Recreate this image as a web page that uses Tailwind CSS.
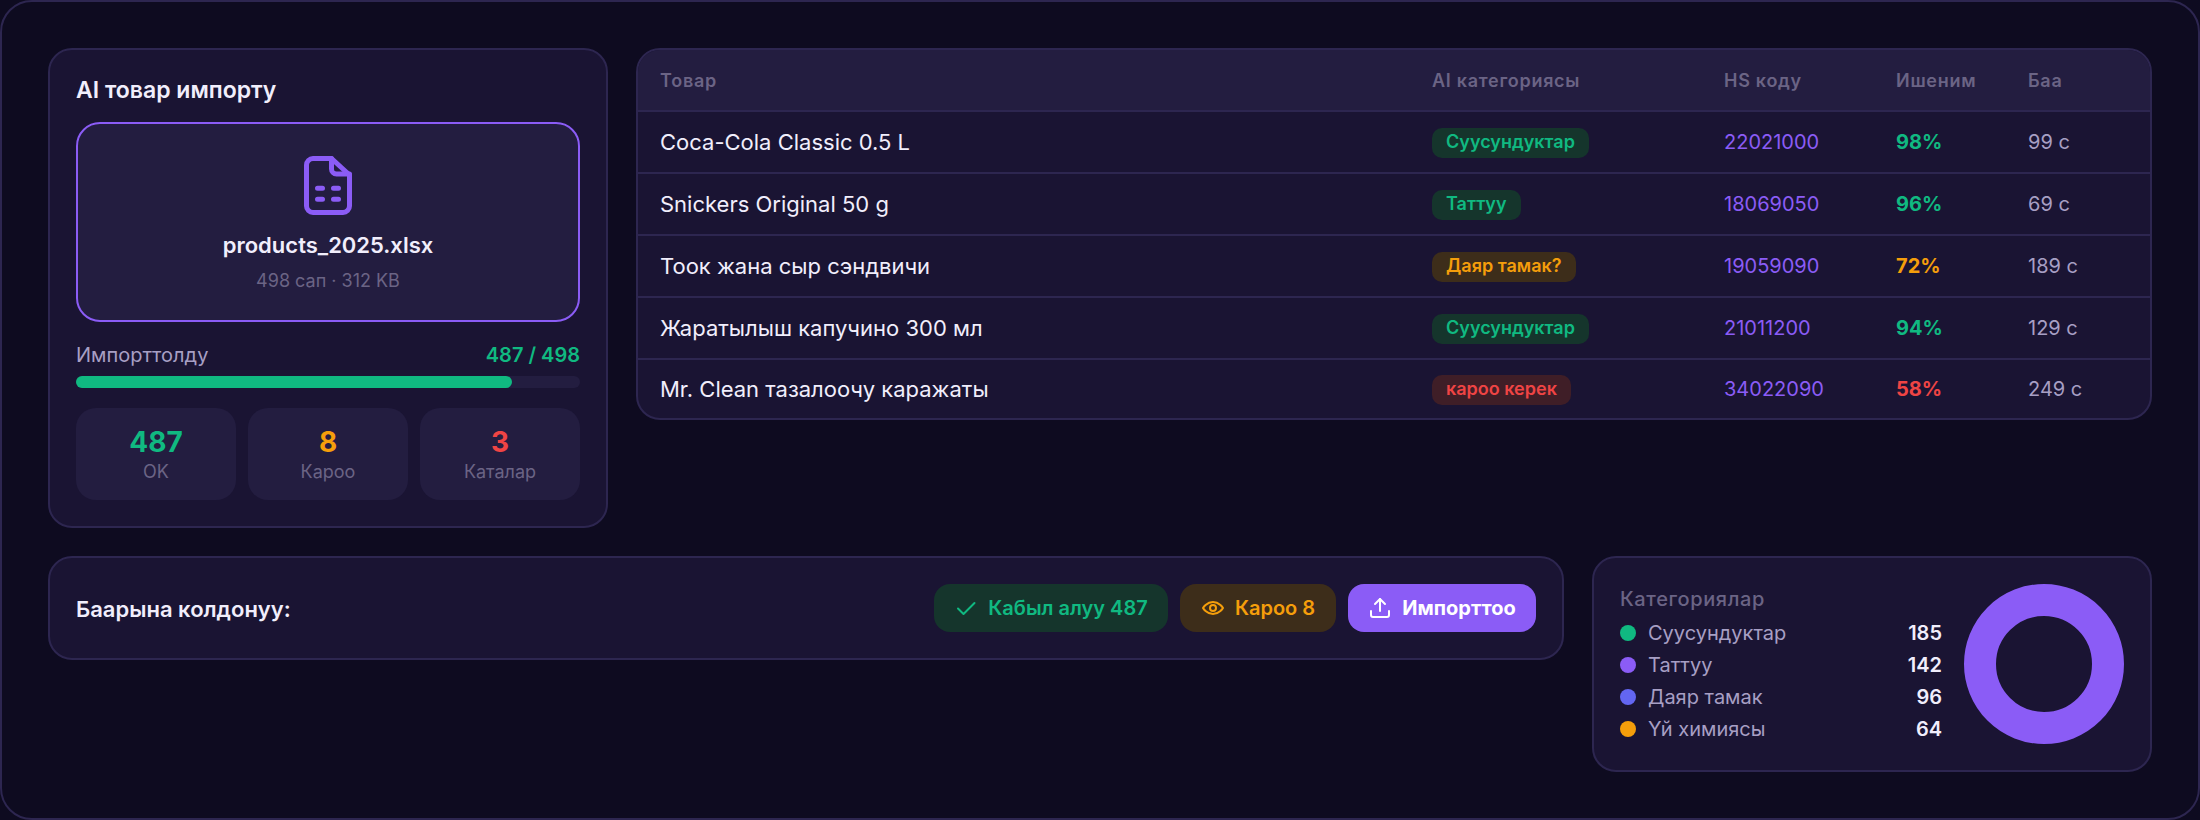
<!DOCTYPE html>
<html lang="ky">
<head>
  <meta charset="UTF-8">
  <title>AI товар импорту</title>
  <script src="https://cdn.jsdelivr.net/npm/@tailwindcss/browser@4"></script>
</head>
<body class="bg-[#0e0b20] font-['Inter',sans-serif]">
  <div class="w-[2200px] h-[820px] bg-[#0e0b20] border-2 border-[#2d2650] rounded-[32px] p-[46px] flex flex-col gap-7 overflow-hidden">

    <div class="flex items-start gap-7">
      <!-- import card -->
      <div class="w-[560px] h-[480px] shrink-0 bg-[#1a1433] border-2 border-[#2d2650] rounded-3xl px-[26px] pt-[26px]">
        <h2 class="text-[23px] leading-7 font-semibold text-[#f1eefc]">AI товар импорту</h2>
        <div class="mt-[18px] h-[200px] bg-[#231d40] border-2 border-[#8b5cf6] rounded-3xl flex flex-col items-center pt-[32px]">
          <svg class="w-[48px] h-[60px] text-[#8b5cf6]" viewBox="0 0 48 60" fill="none" stroke="currentColor" stroke-width="5" stroke-linejoin="round" stroke-linecap="round">
            <path d="M9 2.5h18.5L45.5 19v31a6.5 6.5 0 0 1-6.5 6.5H9a6.5 6.5 0 0 1-6.5-6.5V9A6.5 6.5 0 0 1 9 2.5z"/>
            <path d="M27.5 2.5V13a5 5 0 0 0 5 5h13"/>
            <path d="M13.5 32.3h5M29.5 32.3h5M13.5 43.3h5M29.5 43.3h5"/>
          </svg>
          <p class="mt-[15px] text-[22px] leading-7 font-semibold text-[#f1eefc]">products_2025.xlsx</p>
          <p class="mt-[10px] text-[18px] leading-6 text-[#6b6485]">498 сап · 312 KB</p>
        </div>
        <div class="mt-[21px] flex justify-between items-center">
          <span class="text-[20px] leading-6 text-[#a79fc4]">Импорттолду</span>
          <span class="text-[20px] leading-6 font-semibold text-[#10b981]">487 / 498</span>
        </div>
        <div class="mt-[9px] h-3 rounded-full bg-[#231d40]">
          <div class="h-3 w-[436px] rounded-full bg-[#10b981]"></div>
        </div>
        <div class="mt-5 grid grid-cols-3 gap-3">
          <div class="h-[92px] bg-[#231d40] rounded-[20px] flex flex-col items-center pt-[16px]">
            <span class="text-[28px] leading-9 font-bold text-[#10b981]">487</span>
            <span class="text-[18px] leading-6 text-[#6b6485]">OK</span>
          </div>
          <div class="h-[92px] bg-[#231d40] rounded-[20px] flex flex-col items-center pt-[16px]">
            <span class="text-[28px] leading-9 font-bold text-[#f59e0b]">8</span>
            <span class="text-[18px] leading-6 text-[#6b6485]">Кароо</span>
          </div>
          <div class="h-[92px] bg-[#231d40] rounded-[20px] flex flex-col items-center pt-[16px]">
            <span class="text-[28px] leading-9 font-bold text-[#ef4444]">3</span>
            <span class="text-[18px] leading-6 text-[#6b6485]">Каталар</span>
          </div>
        </div>
      </div>

      <!-- products table -->
      <div class="flex-1 bg-[#1a1433] border-2 border-[#2d2650] rounded-3xl overflow-hidden text-[20px]">
        <div class="h-[62px] bg-[#231d40] border-b-2 border-[#2d2650] pl-[22px] grid grid-cols-[772px_292px_172px_132px_1fr] items-center text-[18px] font-semibold tracking-[0.72px] text-[#6b6485]">
          <span>Товар</span><span>AI категориясы</span><span>HS коду</span><span>Ишеним</span><span>Баа</span>
        </div>
        <div class="h-[62px] border-b-2 border-[#2d2650] pl-[22px] grid grid-cols-[772px_292px_172px_132px_1fr] items-center">
          <span class="text-[22px] text-[#f1eefc]">Coca-Cola Classic 0.5 L</span>
          <span><span class="inline-block h-[30px] leading-[28px] px-[14px] rounded-[10px] text-[18px] font-semibold bg-[#15352c] text-[#10b981]">Суусундуктар</span></span>
          <span class="text-[#8b5cf6]">22021000</span>
          <span class="font-bold text-[#10b981]">98%</span>
          <span class="text-[#a79fc4]">99 с</span>
        </div>
        <div class="h-[62px] border-b-2 border-[#2d2650] pl-[22px] grid grid-cols-[772px_292px_172px_132px_1fr] items-center">
          <span class="text-[22px] text-[#f1eefc]">Snickers Original 50 g</span>
          <span><span class="inline-block h-[30px] leading-[28px] px-[14px] rounded-[10px] text-[18px] font-semibold bg-[#15352c] text-[#10b981]">Таттуу</span></span>
          <span class="text-[#8b5cf6]">18069050</span>
          <span class="font-bold text-[#10b981]">96%</span>
          <span class="text-[#a79fc4]">69 с</span>
        </div>
        <div class="h-[62px] border-b-2 border-[#2d2650] pl-[22px] grid grid-cols-[772px_292px_172px_132px_1fr] items-center">
          <span class="text-[22px] text-[#f1eefc]">Тоок жана сыр сэндвичи</span>
          <span><span class="inline-block h-[30px] leading-[28px] px-[14px] rounded-[10px] text-[18px] font-semibold bg-[#3d2d1a] text-[#f59e0b]">Даяр тамак?</span></span>
          <span class="text-[#8b5cf6]">19059090</span>
          <span class="font-bold text-[#f59e0b]">72%</span>
          <span class="text-[#a79fc4]">189 с</span>
        </div>
        <div class="h-[62px] border-b-2 border-[#2d2650] pl-[22px] grid grid-cols-[772px_292px_172px_132px_1fr] items-center">
          <span class="text-[22px] text-[#f1eefc]">Жаратылыш капучино 300 мл</span>
          <span><span class="inline-block h-[30px] leading-[28px] px-[14px] rounded-[10px] text-[18px] font-semibold bg-[#15352c] text-[#10b981]">Суусундуктар</span></span>
          <span class="text-[#8b5cf6]">21011200</span>
          <span class="font-bold text-[#10b981]">94%</span>
          <span class="text-[#a79fc4]">129 с</span>
        </div>
        <div class="h-[58px] pl-[22px] grid grid-cols-[772px_292px_172px_132px_1fr] items-center">
          <span class="text-[22px] text-[#f1eefc]">Mr. Clean тазалоочу каражаты</span>
          <span><span class="inline-block h-[30px] leading-[28px] px-[14px] rounded-[10px] text-[18px] font-semibold bg-[#3f1e27] text-[#ef4444]">кароо керек</span></span>
          <span class="text-[#8b5cf6]">34022090</span>
          <span class="font-bold text-[#ef4444]">58%</span>
          <span class="text-[#a79fc4]">249 с</span>
        </div>
      </div>
    </div>

    <div class="grid grid-cols-[1fr_560px] items-start gap-7">
      <!-- bulk actions -->
      <div class="h-[104px] bg-[#1a1433] border-2 border-[#2d2650] rounded-3xl px-[26px] flex items-center justify-between">
        <span class="pt-[2px] text-[22px] font-semibold text-[#f1eefc]">Баарына колдонуу:</span>
        <div class="flex gap-3">
          <button class="h-12 w-[234px] rounded-2xl bg-[#15352c] text-[#10b981] text-[20px] font-semibold flex items-center justify-center gap-[10px]">
            <svg class="w-6 h-6" viewBox="0 0 24 24" fill="none" stroke="currentColor" stroke-width="2" stroke-linecap="round" stroke-linejoin="round"><path d="M4 12.5l5.5 5.5L20.5 7"/></svg>
            Кабыл алуу 487
          </button>
          <button class="h-12 w-[156px] rounded-2xl bg-[#3d2d1a] text-[#f59e0b] text-[20px] font-semibold flex items-center justify-center gap-[10px]">
            <svg class="w-6 h-6" viewBox="0 0 24 24" fill="none" stroke="currentColor" stroke-width="2" stroke-linecap="round" stroke-linejoin="round"><path d="M2 12s3.5-6 10-6 10 6 10 6-3.5 6-10 6-10-6-10-6z"/><circle cx="12" cy="12" r="3"/></svg>
            Кароо 8
          </button>
          <button class="h-12 w-[188px] rounded-2xl bg-[#8b5cf6] text-white text-[20px] font-bold flex items-center justify-center gap-[10px]">
            <svg class="w-6 h-6" viewBox="0 0 24 24" fill="none" stroke="currentColor" stroke-width="2" stroke-linecap="round" stroke-linejoin="round"><path d="M3 15v4a2 2 0 0 0 2 2h14a2 2 0 0 0 2-2v-4"/><path d="M17 8l-5-5-5 5"/><path d="M12 3v12"/></svg>
            Импорттоо
          </button>
        </div>
      </div>

      <!-- categories -->
      <div class="h-[216px] bg-[#1a1433] border-2 border-[#2d2650] rounded-3xl px-[26px] flex items-center gap-[22px]">
        <div class="flex-1 pt-[4px]">
          <p class="text-[20px] leading-6 font-medium tracking-[0.6px] text-[#6b6485] mb-[6px]">Категориялар</p>
          <div class="h-8 flex items-center text-[20px]"><span class="w-4 h-4 rounded-full bg-[#10b981] mr-3"></span><span class="flex-1 text-[#a79fc4]">Суусундуктар</span><span class="font-semibold text-[#f1eefc]">185</span></div>
          <div class="h-8 flex items-center text-[20px]"><span class="w-4 h-4 rounded-full bg-[#8b5cf6] mr-3"></span><span class="flex-1 text-[#a79fc4]">Таттуу</span><span class="font-semibold text-[#f1eefc]">142</span></div>
          <div class="h-8 flex items-center text-[20px]"><span class="w-4 h-4 rounded-full bg-[#6366f1] mr-3"></span><span class="flex-1 text-[#a79fc4]">Даяр тамак</span><span class="font-semibold text-[#f1eefc]">96</span></div>
          <div class="h-8 flex items-center text-[20px]"><span class="w-4 h-4 rounded-full bg-[#f59e0b] mr-3"></span><span class="flex-1 text-[#a79fc4]">Үй химиясы</span><span class="font-semibold text-[#f1eefc]">64</span></div>
        </div>
        <div class="w-40 h-40 shrink-0 rounded-full border-[32px] border-[#8b5cf6]"></div>
      </div>
    </div>

  </div>
</body>
</html>
